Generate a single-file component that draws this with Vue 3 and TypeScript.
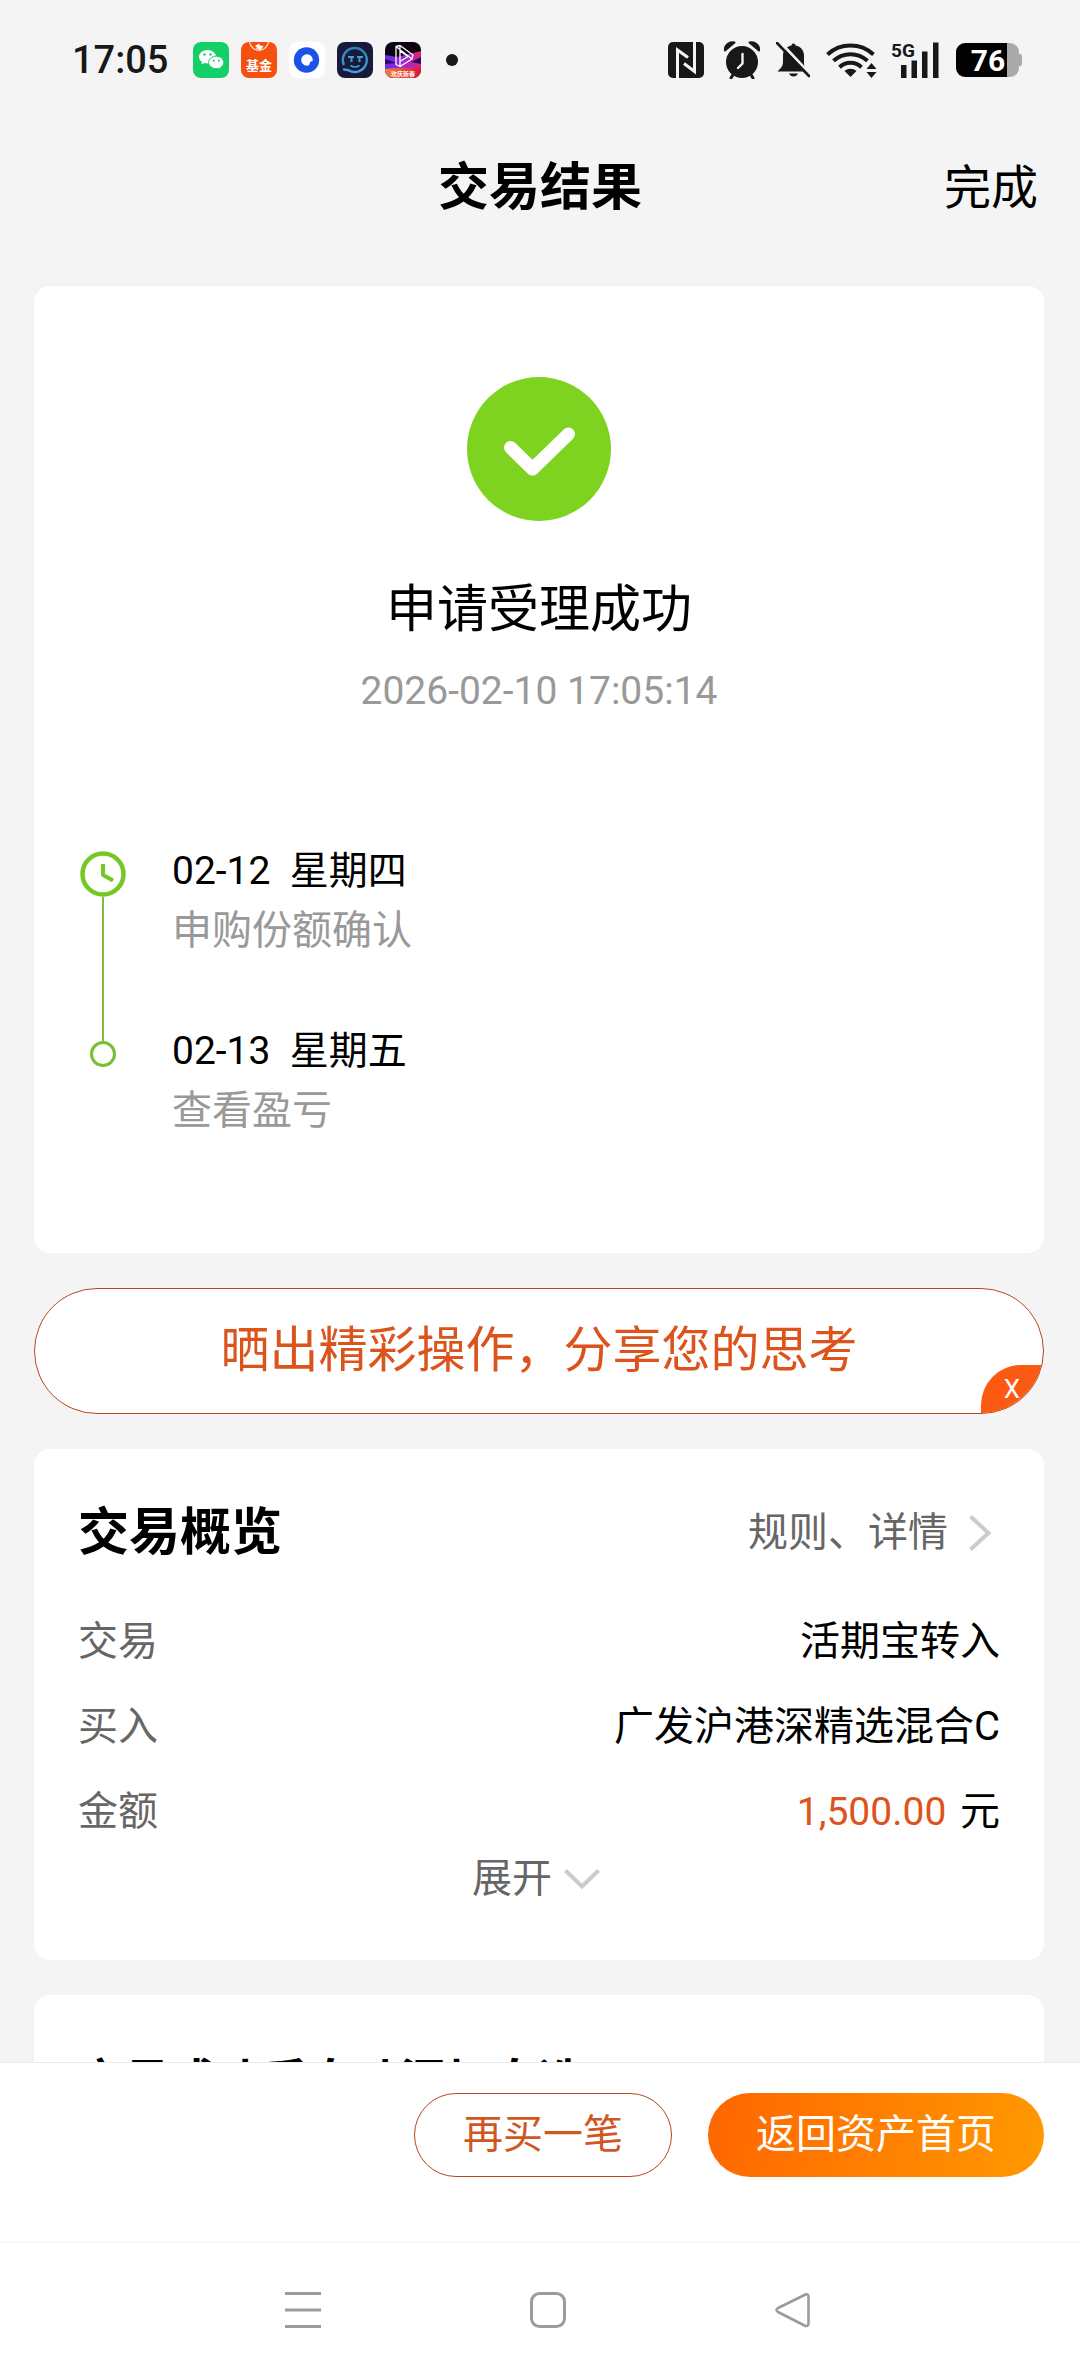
<script setup lang="ts">
interface Step {
  date: string
  weekday: string
  note: string
}

interface Row {
  label: string
  value: string
  amount?: string
}

const steps: Step[] = [
  { date: '02-12', weekday: '星期四', note: '申购份额确认' },
  { date: '02-13', weekday: '星期五', note: '查看盈亏' },
]

const rows: Row[] = [
  { label: '交易', value: '活期宝转入' },
  { label: '买入', value: '广发沪港深精选混合C' },
  { label: '金额', value: '元', amount: '1,500.00' },
]
</script>

<template>
  <div class="page">
    <div class="status">
      <div class="status-left">
        <span class="clock">17:05</span>
        <div class="apps">
          <svg width="36" height="36" viewBox="0 0 36 36">
            <rect width="36" height="36" rx="8" fill="#14cf68" />
            <path d="M14.500 8C9.800 8 6 11 6 14.800c0 2.100 1.200 4 3.100 5.200l-.8 2.600 3-1.500c1 .3 2.100.4 3.200.4 4.700 0 8.500-3 8.500-6.700S19.200 8 14.500 8z" fill="#fff" />
            <circle cx="11.500" cy="12.500" r="1.200" fill="#14cf68" />
            <circle cx="17.500" cy="12.500" r="1.200" fill="#14cf68" />
            <path d="M23.200 14.200c-4.200 0-7.600 2.800-7.600 6.200s3.400 6.200 7.600 6.200c.9 0 1.800-.1 2.600-.4l2.600 1.300-.7-2.200c1.900-1.100 3.100-2.900 3.100-4.900 0-3.400-3.400-6.200-7.600-6.200z" fill="#fff" stroke="#14cf68" stroke-width="1" />
            <circle cx="20.800" cy="18.700" r="1" fill="#14cf68" />
            <circle cx="25.800" cy="18.700" r="1" fill="#14cf68" />
          </svg>
          <svg width="36" height="36" viewBox="0 0 36 36">
            <rect width="36" height="36" rx="8" fill="#f4500f" />
            <path d="M8.500 0a9.800 11 0 0 0 19 0" fill="none" stroke="#ffd9c4" stroke-width="1.200" />
            <path d="M14 4l4-2.500 1 2 3.500.5-3.500 5-1.500-2.500L15 8l1-2.500z" fill="#fff" />
            <text x="18" y="28" text-anchor="middle" font-size="13" font-weight="700" fill="#fff">基金</text>
          </svg>
          <svg width="36" height="36" viewBox="0 0 36 36">
            <rect width="36" height="36" rx="8" fill="#fff" />
            <circle cx="17.500" cy="18" r="12.700" fill="#1a53e6" />
            <path d="M18 12.200a5.900 5.900 0 0 1 5.800 6.800c-2 0-3 1-3.200 2.800-.3 1.400-1.300 2-2.600 2a5.800 5.800 0 0 1 0-11.600z" fill="#fff" />
          </svg>
          <svg width="36" height="36" viewBox="0 0 36 36">
            <defs>
              <linearGradient id="face" x1="0" y1="0" x2="0" y2="1">
                <stop offset="0" stop-color="#2f7fb8" />
                <stop offset="1" stop-color="#3fa3e6" />
              </linearGradient>
            </defs>
            <rect width="36" height="36" rx="8" fill="#171a38" />
            <path d="M6.500 22A12 12 0 1 1 11.500 28.200L7 27.500" fill="none" stroke="url(#face)" stroke-width="2.400" stroke-linecap="round" />
            <path d="M11 15h6M20 15h6M14.500 15v5M22.500 15v5" stroke="#3f9fd8" stroke-width="2" fill="none" />
            <path d="M13.500 23.500q4.500 3 9 0" stroke="#3f9fd8" stroke-width="1.600" fill="none" />
          </svg>
          <svg width="36" height="36" viewBox="0 0 36 36">
            <defs>
              <clipPath id="tile"><rect width="36" height="36" rx="8" /></clipPath>
              <linearGradient id="neon" x1="0" y1="0" x2="1" y2="0">
                <stop offset="0" stop-color="#6a2be8" />
                <stop offset="0.600" stop-color="#a524d8" />
                <stop offset="1" stop-color="#e0245e" />
              </linearGradient>
              <linearGradient id="ribbon" x1="0" y1="0" x2="1" y2="0">
                <stop offset="0" stop-color="#f0803c" />
                <stop offset="1" stop-color="#e01238" />
              </linearGradient>
            </defs>
            <g clip-path="url(#tile)">
              <rect width="36" height="36" fill="#0b0410" />
              <path d="M0 13l12 2L36 9v20H0z" fill="url(#neon)" />
              <path d="M0 17l12 4-12 1zM26 20l10-5v7z" fill="#2a0a66" />
              <path d="M0 27q18-3 36 0v9H0z" fill="url(#ribbon)" />
              <path d="M11 4.500l4-1 13 9.500-1 4-12 7.500-4-2zM15 3.500v21M15 9l8 5.500-8 5M11 4.500l16 12.500" fill="none" stroke="#fff" stroke-width="1.300" stroke-linejoin="round" />
              <text x="18" y="33.500" text-anchor="middle" font-size="6" font-weight="700" fill="#fff">欢庆新春</text>
            </g>
          </svg>
        </div>
        <span class="more"></span>
      </div>

      <div class="status-right">
        <svg width="40" height="36" viewBox="0 0 40 36">
          <rect width="36" height="36" rx="5" fill="#181818" />
          <path d="M9.500 36V8L20 15.500M26.500 0v29.500L16 21.500" fill="none" stroke="#f4f4f4" stroke-width="3" />
        </svg>
        <svg width="36" height="38" viewBox="0 0 36 38">
          <circle cx="18" cy="21" r="16" fill="#181818" />
          <path d="M1 9.500C0 5 5 0 10.500 1.500zM35 9.500C36 5 31 0 25.500 1.500z" fill="#181818" stroke="#181818" stroke-width="2" stroke-linejoin="round" />
          <path d="M9.500 33L7 37M26.500 33l2.500 4" stroke="#181818" stroke-width="3" stroke-linecap="round" />
          <path d="M18.500 13v9.500L14 27" fill="none" stroke="#f4f4f4" stroke-width="2.400" stroke-linecap="round" />
        </svg>
        <svg width="34" height="36" viewBox="0 0 34 36">
          <path d="M17.500 1.500c1.200 0 2 .8 2 2 5.400 1 8.500 5 8.500 10v8c0 3 1.500 5 4 8H1.500c3-3 5.500-5.500 5.500-9v-7c0-5 3.500-9 8.500-10 0-1.200.8-2 2-2z" fill="#181818" />
          <path d="M13 31.500h9c-.8 2-2.500 3-4.500 3s-3.700-1-4.500-3z" fill="#181818" />
          <path d="M4 0l31 33" stroke="#f4f4f4" stroke-width="3" />
          <path d="M1 1l32 33" stroke="#181818" stroke-width="2.600" stroke-linecap="round" />
        </svg>
        <svg class="spill" width="50" height="36" viewBox="0 0 50 36">
          <g fill="none" stroke="#181818" stroke-width="4">
            <path d="M1.500 12.500a34 34 0 0 1 46 0" />
            <path d="M7.500 18.800a25 25 0 0 1 34 0" />
            <path d="M13.500 25.200a16 16 0 0 1 22 0" />
          </g>
          <path d="M24.500 35l-6-6c3.500-3 8.500-3 12 0z" fill="#181818" />
          <path d="M40.500 27l5-6 5 6zM40.500 30h10l-5 6z" fill="#181818" />
        </svg>
        <svg class="spill" width="48" height="36" viewBox="0 0 48 36">
          <text x="-1" y="15" font-size="19" font-weight="700" fill="#181818">5G</text>
          <path d="M9 23h5.500v13H9zM19.500 18.500H25V36h-5.500zM30 9.500h5.500V36H30zM41 0.500h5.500V36H41z" fill="#181818" />
        </svg>
        <svg width="66" height="34" viewBox="0 0 66 34">
          <path d="M8 0h46a9 9 0 0 1 9 9v16a9 9 0 0 1-9 9H8z" fill="#a9a9a9" />
          <path d="M62 11h1.500a2.500 2.500 0 0 1 2.500 2.500v7a2.500 2.500 0 0 1-2.500 2.500H62z" fill="#a9a9a9" />
          <path d="M51 0H9a9 9 0 0 0-9 9v16a9 9 0 0 0 9 9h42z" fill="#000" />
          <text x="32" y="28" text-anchor="middle" font-size="30" font-weight="700" fill="#fff">76</text>
        </svg>
      </div>
    </div>

    <header class="header">
      <h1>交易结果</h1>
      <button type="button" class="done">完成</button>
    </header>

    <main class="content">
      <section class="card result">
        <svg width="144" height="144" viewBox="0 0 144 144">
          <circle cx="72" cy="72" r="72" fill="#7ed321" />
          <path d="M43.500 70.500L65.500 92L101.500 57" fill="none" stroke="#fff" stroke-width="13" stroke-linecap="round" stroke-linejoin="round" />
        </svg>
        <h2>申请受理成功</h2>
        <time>2026-02-10 17:05:14</time>

        <ol class="timeline">
          <li v-for="(step, i) in steps" :key="step.date">
            <div class="marker" :class="{ last: i > 0 }">
              <svg v-if="i === 0" width="46" height="46" viewBox="0 0 46 46">
                <circle cx="23" cy="23" r="20.500" fill="none" stroke="#73c823" stroke-width="4.500" />
                <path d="M23 13v11l10 5.500" fill="none" stroke="#73c823" stroke-width="4" stroke-linejoin="round" />
              </svg>
              <span class="line"></span>
              <span v-if="i > 0" class="dot"></span>
            </div>
            <div>
              <p class="when">{{ step.date }}&nbsp;&nbsp;{{ step.weekday }}</p>
              <p class="note">{{ step.note }}</p>
            </div>
          </li>
        </ol>
      </section>

      <div class="share">
        <button type="button" class="share-main">晒出精彩操作，分享您的思考</button>
        <button type="button" class="share-close">X</button>
      </div>

      <section class="card overview">
        <div class="overview-head">
          <h3>交易概览</h3>
          <a href="#" class="rules">
            规则、详情
            <svg width="24" height="38" viewBox="0 0 24 38">
              <path d="M2.500 2.500L20.500 19L2.500 35.500" fill="none" stroke="#cbcbcb" stroke-width="4" />
            </svg>
          </a>
        </div>
        <dl>
          <div v-for="row in rows" :key="row.label" class="row">
            <dt>{{ row.label }}</dt>
            <dd><span v-if="row.amount" class="amount">{{ row.amount }}&nbsp;</span>{{ row.value }}</dd>
          </div>
        </dl>
        <button type="button" class="expand">
          展开
          <svg width="36" height="22" viewBox="0 0 36 22">
            <path d="M1.500 2.500L18 18.500L34.500 2.500" fill="none" stroke="#cbcbcb" stroke-width="4" />
          </svg>
        </button>
      </section>

      <section class="card auto">
        <h3>交易成功后自动添加自选</h3>
      </section>
    </main>

    <footer class="actions">
      <button type="button" class="again">再买一笔</button>
      <button type="button" class="home">返回资产首页</button>
    </footer>

    <nav class="system">
      <button type="button" aria-label="最近任务">
        <svg width="36" height="36" viewBox="0 0 36 36">
          <path d="M0 1.500h36M0 18h36M0 34.500h36" stroke="#9b9b9b" stroke-width="3" />
        </svg>
      </button>
      <button type="button" aria-label="主屏幕">
        <svg width="36" height="36" viewBox="0 0 36 36">
          <rect x="1.500" y="1.500" width="33" height="33" rx="8" fill="none" stroke="#9b9b9b" stroke-width="3" />
        </svg>
      </button>
      <button type="button" aria-label="返回">
        <svg width="36" height="36" viewBox="0 0 36 36">
          <path d="M30.500 2.500L3 16q-3 2 0 4l27.500 14q3 .5 3-2.500v-27q0-3-3-2z" fill="none" stroke="#9b9b9b" stroke-width="2.600" stroke-linejoin="round" />
        </svg>
      </button>
    </nav>
  </div>
</template>

<style>
body {
  margin: 0;
  background: #f4f4f4;
}
</style>

<style scoped>
.page {
  display: flex;
  flex-direction: column;
  height: 100vh;
  background: #f4f4f4;
  color: #000;
  font-family: Roboto, "Noto Sans CJK SC", sans-serif;
  font-size: 40px;
}

h1,
h2,
h3,
p,
ol,
dl,
dd {
  margin: 0;
  padding: 0;
}

svg {
  display: block;
  flex: none;
}

button {
  padding: 0;
  border: 0;
  background: none;
  color: inherit;
  font: inherit;
}

.status {
  display: flex;
  flex: none;
  align-items: center;
  justify-content: space-between;
  height: 120px;
  padding: 0 58px 0 72px;
  box-sizing: border-box;
}

.status-left,
.status-right,
.apps {
  display: flex;
  align-items: center;
}

.status-left {
  gap: 25px;
}

.status-right {
  gap: 16px;
}

.apps {
  gap: 12px;
}

.spill {
  overflow: visible;
}

.clock {
  color: #181818;
  font-size: 39px;
  font-size: 38px;
  font-weight: 500;
  line-height: 48px;
}

.more {
  width: 12px;
  height: 12px;
  border-radius: 50%;
  background: #181818;
}

.header {
  display: grid;
  grid-template-columns: 1fr auto 1fr;
  flex: none;
  align-items: center;
  height: 130px;
  padding: 6px 42px 0;
  box-sizing: border-box;
}

.header h1 {
  grid-column: 2;
  font-size: 51px;
  font-weight: 700;
  line-height: 72px;
}

.done {
  justify-self: end;
  font-size: 47px;
  line-height: 72px;
}

.content {
  display: flex;
  flex: 1;
  flex-direction: column;
  gap: 35px;
  min-height: 0;
  padding: 36px 36px 0 34px;
  overflow: hidden;
}

.card {
  flex: none;
  border-radius: 16px;
  background: #fff;
}

.result {
  display: flex;
  flex-direction: column;
  align-items: center;
  padding: 91px 46px 112px;
}

.result h2 {
  margin-top: 53px;
  font-size: 51px;
  font-weight: 400;
  line-height: 72px;
}

.result time {
  margin-top: 17px;
  color: #999;
  font-size: 39px;
  line-height: 56px;
}

.timeline {
  align-self: stretch;
  margin-top: 122px;
  list-style: none;
}

.timeline li {
  display: flex;
  gap: 46px;
}

.timeline li:not(:last-child) {
  height: 180px;
}

.timeline p {
  line-height: 60px;
}

.marker {
  display: flex;
  flex-direction: column;
  align-items: center;
  width: 46px;
  padding-top: 10px;
}

.marker .line {
  flex: 1;
  width: 2px;
  background: #7dbb45;
}

.marker.last {
  padding-top: 0;
}

.marker.last .line {
  flex: none;
  height: 20px;
}

.dot {
  width: 20px;
  height: 20px;
  border: 3px solid #78c030;
  border-radius: 50%;
}

.when {
  font-size: 39px;
}

.note {
  color: #999;
}

.share {
  position: relative;
  flex: none;
  height: 124px;
  border: 1px solid #b8481c;
  border-radius: 63px;
  background: #fff;
  overflow: hidden;
}

.share-main {
  width: 100%;
  height: 100%;
  color: #dc541c;
  font-size: 49px;
  line-height: 72px;
}

.share-close {
  position: absolute;
  right: 0;
  bottom: 0;
  width: 62px;
  height: 48px;
  border-radius: 40px 0 0 0;
  background: #fc5a12;
  color: #fff;
  font-size: 26px;
  line-height: 48px;
}

.overview {
  padding: 48px 44px 51px;
}

.overview-head {
  display: flex;
  align-items: center;
  justify-content: space-between;
}

h3 {
  font-size: 51px;
  font-weight: 700;
  line-height: 72px;
}

.rules {
  display: flex;
  align-items: center;
  gap: 20px;
  margin-right: 8px;
  color: #666;
  line-height: 72px;
  text-decoration: none;
}

dl {
  margin-top: 30px;
}

.row {
  display: flex;
  justify-content: space-between;
  line-height: 85px;
}

dt {
  color: #666;
}

.amount {
  margin-right: 4px;
  color: #dc541c;
  font-size: 39px;
}

.expand {
  display: flex;
  align-items: center;
  gap: 12px;
  margin: -6px auto 0;
  padding-right: 6px;
  color: #666;
  line-height: 60px;
}

.auto {
  padding: 50px 44px;
}

.auto h3 {
  font-size: 46px;
}

.actions {
  display: flex;
  flex: none;
  align-items: flex-start;
  justify-content: flex-end;
  gap: 36px;
  height: 180px;
  padding: 30px 36px 0;
  border-top: 1px solid #ebebeb;
  background: #fff;
  box-sizing: border-box;
}

.actions button {
  height: 84px;
  padding: 0 48px;
  border-radius: 42px;
  line-height: 60px;
}

.actions .again {
  border: 1px solid #b8481c;
  color: #d2561f;
}

.actions .home {
  background: linear-gradient(100deg, #ff6600, #ff9900);
  color: #fff;
}

.system {
  display: flex;
  flex: none;
  align-items: center;
  justify-content: center;
  gap: 209px;
  height: 134px;
  padding-left: 16px;
  border-top: 1px solid #f4f4f4;
  background: #fff;
  box-sizing: border-box;
}
</style>
